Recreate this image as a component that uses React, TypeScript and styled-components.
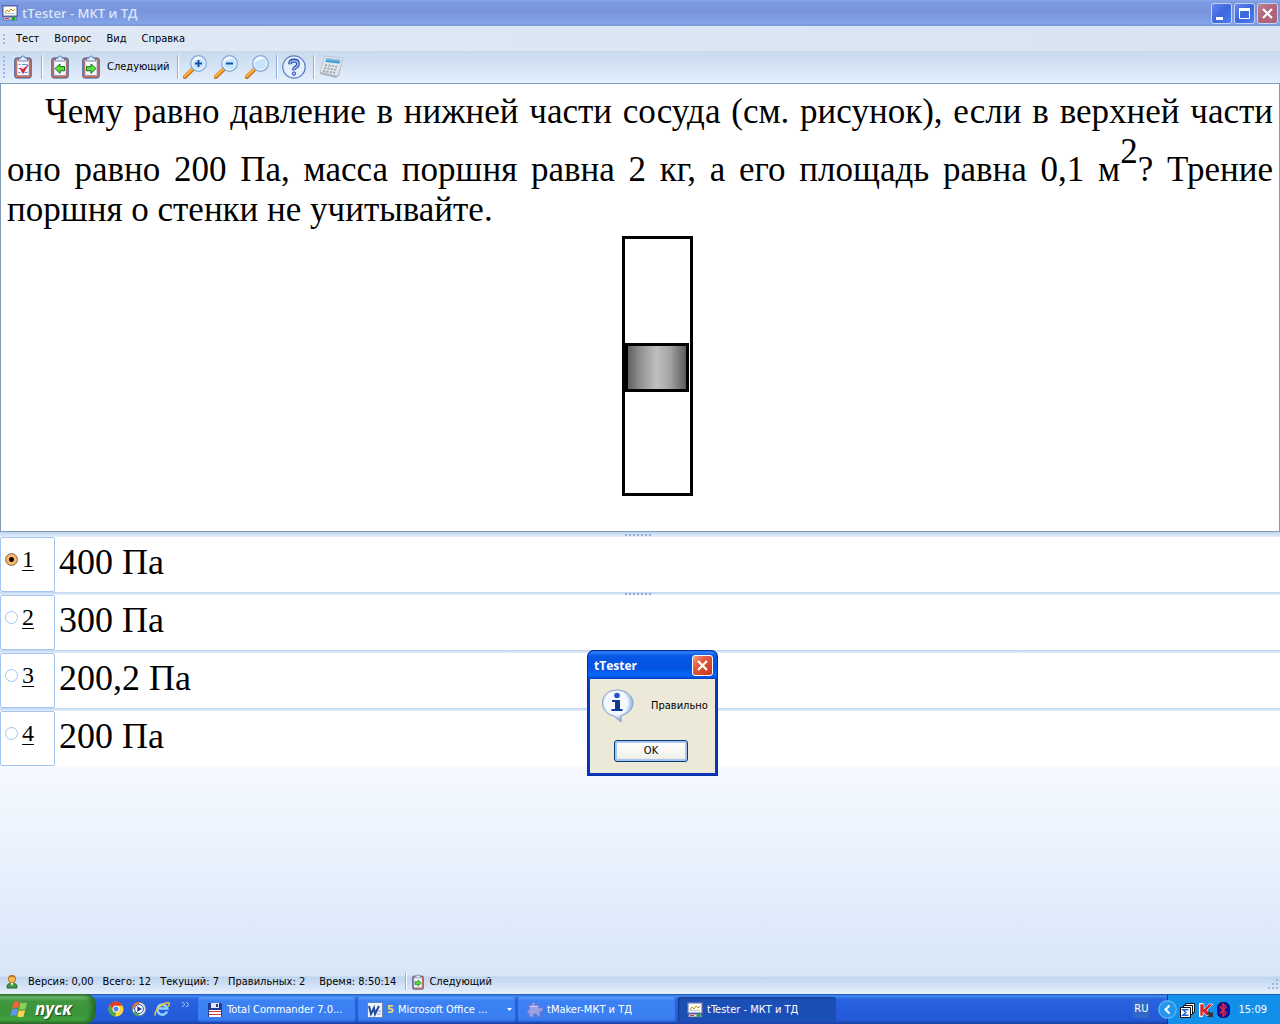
import React, { useState } from "react";
import styled, { createGlobalStyle, css } from "styled-components";

const uiFont = `"DejaVu Sans Condensed", "DejaVu Sans", sans-serif`;
const captionFont = `"Open Sans", "Noto Sans", sans-serif`;
const textFont = `"Liberation Serif", "Times New Roman", serif`;

const GlobalStyle = createGlobalStyle`
  *, *::before, *::after { box-sizing: border-box; }
  body { margin: 0; font: 11px/16px ${uiFont}; color: #000; }
  button { font: inherit; color: inherit; padding: 0; border: 0; background: none; }
  svg { display: block; flex: none; }
`;

const Desktop = styled.div`
  position: relative;
  display: flex;
  flex-direction: column;
  min-height: 100vh;
  background: #fff;
`;

const TitleBar = styled.header`
  display: flex;
  align-items: center;
  gap: 4px;
  height: 26px;
  padding: 0 2px;
  background: linear-gradient(#86a6e8 0, #7b98e0 3px, #7894dd 12px, #7f9fe6 20px, #82a5e8 23px, #7b93d8 26px);
`;

const Caption = styled.h1`
  flex: 1;
  margin: 0;
  font: 600 13px/20px ${captionFont};
  color: #dbe5f9;
`;

const CaptionButtons = styled.div`
  display: flex;
  gap: 2px;
`;

const CaptionButton = styled.button<{ $close?: boolean }>`
  display: grid;
  place-items: center;
  width: 21px;
  height: 21px;
  border: 1px solid #c3d3f4;
  border-radius: 3px;
  background: ${(p) =>
    p.$close
      ? "linear-gradient(135deg, #c08292, #b0637a 50%, #a96678)"
      : "linear-gradient(135deg, #6389ec, #3d66dd 50%, #4a80f0)"};
`;

const MenuBar = styled.nav`
  display: flex;
  align-items: center;
  gap: 15px;
  height: 25px;
  padding: 0 3px;
  background: linear-gradient(90deg, #dfe9f5, #d8e4f2);
`;

const MenuItem = styled.button``;

const Grip = styled.span<{ $tall?: boolean }>`
  width: 2px;
  height: ${(p) => (p.$tall ? 22 : 10)}px;
  margin-right: ${(p) => (p.$tall ? 9 : -4)}px;
  background: repeating-linear-gradient(#9dbbe6 0 2px, transparent 2px 4px);
`;

const ToolBar = styled.div`
  display: flex;
  align-items: center;
  height: 32px;
  padding: 0 3px;
  background: linear-gradient(#c9daee, #d5e4f6 50%, #e5f0fe);
`;

const ToolButton = styled.button<{ $space?: number }>`
  display: flex;
  align-items: center;
  gap: 7px;
  margin-right: ${(p) => p.$space ?? 7}px;
`;

const Divider = styled.span<{ $tight?: boolean }>`
  width: 2px;
  height: 24px;
  margin-right: ${(p) => (p.$tight ? 4 : 8)}px;
  border-left: 1px solid #8fb0dd;
  border-right: 1px solid #fff;
`;

const Question = styled.main`
  padding: 8px 6px 35px;
  border: 1px solid #7f9db9;
`;

const QuestionText = styled.p`
  margin: 0 0 6px;
  font: 35px/40px ${textFont};
  text-align: justify;
  text-indent: 38px;
`;

const Power = styled.span`
  vertical-align: 18px;
`;

const Figure = styled.figure`
  display: flex;
  justify-content: center;
  margin: 0;
  padding-left: 34px;
`;

const Splitter = styled.div<{ $wide?: boolean }>`
  display: flex;
  justify-content: center;
  align-items: center;
  height: ${(p) => (p.$wide ? 5 : 3)}px;
  padding-right: 4px;
  background: linear-gradient(#bfd4ef, #e6effc);
`;

const SplitterDots = styled.span`
  width: 26px;
  height: 2px;
  background: repeating-linear-gradient(90deg, #8faadb 0 2px, transparent 2px 4px);
`;

const Answers = styled.form`
  display: flex;
  flex-direction: column;
`;

const AnswerRow = styled.label`
  display: flex;
  height: 55px;
  background: #fff;
  font: 36px/51px ${textFont};
`;

const AnswerKey = styled.span`
  display: flex;
  align-items: center;
  gap: 4px;
  width: 55px;
  margin-right: 4px;
  padding: 0 0 11px 4px;
  border: 1px solid #a3c3f0;
  border-radius: 2px;
  font: 24px/26px ${textFont};
  text-decoration: underline;
  text-decoration-thickness: 1px;
  text-underline-offset: 3px;
`;

const Radio = styled.input`
  appearance: none;
  width: 13px;
  height: 13px;
  margin: 0;
  border: 1px solid #a3c3f0;
  border-radius: 50%;
  background: #fff;

  &:checked {
    border-color: #80705c;
    background: radial-gradient(circle, #000 0 2px, #ffc078 3px, #f5a855 5px, #ffd79f 6px);
  }
`;

const EmptyArea = styled.div`
  flex: 1;
  background: linear-gradient(#f6faff, #d9e7fa);
`;

const StatusBar = styled.footer`
  display: flex;
  align-items: center;
  height: 29px;
  padding: 4px 0 0 4px;
  background: linear-gradient(#dbe8f9 0, #d7e5f7 11px, #bfd5ef 12px, #cfdff5 19px, #e4effd 28px);
`;

const StatusItem = styled.span<{ $wide?: boolean }>`
  margin-right: ${(p) => (p.$wide ? 14 : 9)}px;
`;

const StatusIcon = styled.span`
  margin-right: 8px;
`;

const StatusButton = styled.button`
  display: flex;
  align-items: center;
  gap: 5px;
`;

const StatusDivider = styled(Divider)`
  height: 17px;
  margin-right: 5px;
`;

const SizeGrip = styled.span`
  margin: 7px 0 0 auto;
`;

const TaskBar = styled.div`
  display: flex;
  align-items: stretch;
  height: 30px;
  color: #fff;
  background: linear-gradient(#1f4fb8 0, #3f8cf0 2px, #2a63e0 5px, #245bdb 20px, #2259d6 26px, #1941a5 30px);
`;

const StartButton = styled.button`
  display: flex;
  align-items: center;
  gap: 6px;
  width: 96px;
  padding-left: 10px;
  border-radius: 0 10px 12px 0;
  background: linear-gradient(#2e7430 0, #6fbc6f 3px, #41973f 7px, #3a953a 20px, #40a33e 26px, #2b6f2b 30px);
  box-shadow: inset -4px 0 5px #266526;
  font: italic 700 17px/24px ${captionFont};
  text-shadow: 1px 1px 1px #1c481c;
`;

const QuickLaunch = styled.div`
  display: flex;
  align-items: center;
  gap: 7px;
  width: 102px;
  padding-left: 12px;
`;

const LaunchButton = styled.button``;

const Tasks = styled.div`
  display: flex;
  flex: 1;
  gap: 2px;
  padding: 3px 0 2px;
`;

const Task = styled.button<{ $active?: boolean }>`
  display: flex;
  align-items: center;
  gap: 4px;
  width: 158px;
  padding: 0 4px 0 9px;
  border-radius: 3px;
  text-align: left;
  ${(p) =>
    p.$active
      ? css`
          background: #1c4fb5;
          box-shadow: inset 1px 1px 2px #103887;
        `
      : css`
          background: linear-gradient(#5a9bfa 0, #3c81f3 4px, #3b80f3 20px, #3573e6 25px);
          box-shadow: inset -1px -1px 1px #2a62cf;
        `}
`;

const TaskName = styled.span`
  flex: 1;
  white-space: nowrap;
`;

const TaskCount = styled.b`
  color: #ffcf6b;
`;

const Language = styled.button`
  align-self: center;
  height: 17px;
  margin-right: 9px;
  padding: 0 1px;
  background: #3169c6;
`;

const Tray = styled.div`
  display: flex;
  align-items: center;
  gap: 3px;
  padding-right: 13px;
  background: linear-gradient(90deg, transparent 0 9px, #0a3b8f 9px 10px, transparent 10px),
    linear-gradient(90deg, transparent 9px, #1290e9 9px);
  border-top: 1px solid #1b59b5;
`;

const Clock = styled.time`
  margin-left: 5px;
`;

const Dialog = styled.section`
  position: absolute;
  top: 650px;
  left: calc(50% - 53px);
  width: 131px;
  padding: 0 3px 3px;
  border-radius: 7px 7px 0 0;
  background: linear-gradient(#0a4fd8 0, #2b80f8 2px, #0557e5 6px, #0453e0 18px, #0666fb 25px, #0340c8 29px, #0b35ba 100%);
  box-shadow: inset 0 0 0 1px #0831a8;
`;

const DialogHead = styled.header`
  display: flex;
  align-items: center;
  height: 29px;
  padding: 2px 2px 0 4px;
`;

const DialogTitle = styled.h2`
  flex: 1;
  margin: 0;
  font: 700 12px/20px ${captionFont};
  color: #fff;
`;

const DialogClose = styled(CaptionButton)`
  border-color: #fff;
  background: linear-gradient(135deg, #f0a08a, #e1573a 40%, #c9361a);
`;

const DialogBody = styled.div`
  display: flex;
  flex-direction: column;
  align-items: center;
  gap: 17px;
  padding: 10px 3px 11px 0;
  background: #ece9d8;
`;

const Message = styled.div`
  display: flex;
  align-items: center;
  align-self: flex-start;
  gap: 16px;
  padding-left: 11px;
`;

const OkButton = styled.button`
  width: 74px;
  height: 22px;
  border: 1px solid #003c74;
  border-radius: 3px;
  background: linear-gradient(#fff, #f3f2ec 80%, #dfdccf);
  box-shadow: inset 0 0 0 2px #a9c6f2;
`;

const AppIcon = () => (
  <svg width="16" height="16" viewBox="0 0 16 16">
    <path d="M0 0h16v12H0z" fill="#5a68b4" />
    <path d="M1.5 1.5h13v9h-13z" fill="#fffdf0" />
    <path d="M3 8l2-3 2 2 2-3 2 2 2-2" fill="none" stroke="#c79024" />
    <path d="M3 8.5h10" stroke="#b8c6e8" />
    <path d="M2 12h12l1 3H1z" fill="#d8d5e8" stroke="#4d5795" strokeWidth=".7" />
    <path d="M3 13.5h4" stroke="#c0404b" />
    <circle cx="11.5" cy="13.5" r="2" fill="#22a42e" />
  </svg>
);

type ClipKind = "check" | "left" | "right";

const Clipboard = ({ kind, size = 24 }: { kind: ClipKind; size?: number }) => (
  <svg width={size === 24 ? 18 : 12} height={size} viewBox="0 0 18 24">
    <rect x=".8" y="3" width="16.4" height="20" rx="2" fill="#d9714d" stroke="#3d5696" />
    <path d="M3 5h12v15.5H3z" fill="#f6f9ff" stroke="#6e83b8" strokeWidth=".6" />
    <path d="M4.5 6V3.2h2.3Q7 1 9 1t2.2 2.2h2.3V6z" fill="#e2eaf8" stroke="#53699f" strokeWidth=".8" />
    {kind === "check" && (
      <>
        <path d="M4.5 9.5h2M8 9.5h5.5M4.5 13.5h2M10.5 17.5h3M4.5 17.5h2" stroke="#6a8bd0" />
        <path d="M6 13l3 5.5L14 10l-5 4.5z" fill="#e01b2d" stroke="#d8202c" strokeWidth=".8" />
      </>
    )}
    {kind === "left" && (
      <path d="M4 13.5L9 9v2.6h4.5v4.2H9v2.7z" fill="#5fdc3c" stroke="#13741a" />
    )}
    {kind === "right" && (
      <path d="M14 13.5L9 9v2.6H4.5v4.2H9v2.7z" fill="#5fdc3c" stroke="#13741a" />
    )}
  </svg>
);

const Magnifier = ({ sign }: { sign?: "+" | "-" }) => (
  <svg width="24" height="24" viewBox="0 0 24 24">
    <path d="M1.8 22L10 14" stroke="#c0701c" strokeWidth="4" strokeLinecap="round" />
    <path d="M1.7 21.4L9.5 13.8" stroke="#ffad35" strokeWidth="2.4" strokeLinecap="round" />
    <circle cx="15.5" cy="8.5" r="7.8" fill="#c4e5fb" stroke="#8cacd9" strokeWidth="1.3" />
    <path d="M9.5 8a6 6 0 0 1 10-4.3Q12 4 9.5 8z" fill="#fff" opacity=".85" />
    <circle cx="15.5" cy="8.5" r="6.4" fill="none" stroke="#eff9ff" />
    {sign && <path d="M12 8.5h7" stroke="#1450aa" strokeWidth="2" />}
    {sign === "+" && <path d="M15.5 5v7" stroke="#1450aa" strokeWidth="2" />}
  </svg>
);

const HelpIcon = () => (
  <svg width="24" height="24" viewBox="0 0 24 24">
    <circle cx="12" cy="12" r="11.2" fill="#e4effe" stroke="#5c7fc4" strokeWidth="1.2" />
    <path d="M8 9.2Q8 5.5 12 5.5t4 3.5q0 2-2.1 3.2T12 15.2" fill="none" stroke="#2d4fa8" strokeWidth="3.8" />
    <path d="M8 8.8Q8.2 5.7 12 5.7t4 3.3q0 2-2.1 3.2T12 14.7" fill="none" stroke="#9ec0f4" strokeWidth="1.6" />
    <circle cx="12" cy="18.6" r="1.7" fill="#9ec0f4" stroke="#2d4fa8" />
  </svg>
);

const Calculator = () => (
  <svg width="26" height="24" viewBox="0 0 26 24">
    <path d="M6 1l18 2-4 18-3 2L1 19v-2z" fill="#aeb5bf" />
    <path d="M6 1l18 2-5 18L1 17z" fill="#e4e7eb" stroke="#b4bcc7" strokeWidth=".7" />
    <path d="M7.5 3l14 1.7-1 4L6.3 7z" fill="#4d9cd8" />
    <path d="M7.5 3l14 1.7-.4 1.5L7 4.6z" fill="#91c4e9" />
    <path d="M6 10l13 2M5 13l13 2M4 16l13 2" stroke="#a3abb6" strokeWidth="2" strokeDasharray="2.2 1.2" />
  </svg>
);

const Vessel = () => (
  <svg width="71" height="260" viewBox="0 0 71 260" role="img" aria-label="Сосуд с поршнем">
    <defs>
      <linearGradient id="piston">
        <stop offset="0" stopColor="#5a5a5a" />
        <stop offset=".25" stopColor="#969696" />
        <stop offset=".5" stopColor="#c0c0c0" />
        <stop offset=".72" stopColor="#a2a2a2" />
        <stop offset="1" stopColor="#555" />
      </linearGradient>
    </defs>
    <rect x="1.5" y="1.5" width="68" height="257" fill="none" stroke="#000" strokeWidth="3" />
    <rect x="4.5" y="108.5" width="61" height="46" fill="url(#piston)" stroke="#000" strokeWidth="3" />
  </svg>
);

const UserIcon = () => (
  <svg width="16" height="16" viewBox="0 0 16 16">
    <path d="M3 13q0-4 5-4t5 4v1H3z" fill="#3f9b48" stroke="#26642d" />
    <path d="M6 8h4l-2 4z" fill="#fff1c4" />
    <circle cx="8" cy="5" r="3.7" fill="#f6bd58" stroke="#b87320" />
    <path d="M4.6 4Q5 1 8 1t3.4 3Q8 2 4.6 4z" fill="#bd7622" />
  </svg>
);

const WindowsFlag = () => (
  <svg width="19" height="18" viewBox="0 0 19 18">
    <path d="M3.5 2.5Q6.5.5 9.5 2L8 8.5Q5 7 2 9z" fill="#f0623a" />
    <path d="M10.5 2.4Q13.5 4 17 2.2L15.4 8.8Q12 10.5 9 9z" fill="#8ed15a" />
    <path d="M1.8 10Q4.8 8 7.8 9.5L6.2 16Q3.5 14.5.2 16.5z" fill="#5e97f6" />
    <path d="M8.8 10Q12 11.5 15.2 9.8L13.6 16.5Q10.5 18 7.2 16.5z" fill="#fbd24c" />
  </svg>
);

const ChromeIcon = () => (
  <svg width="16" height="16" viewBox="0 0 16 16">
    <circle cx="8" cy="8" r="7.5" fill="#f9d33f" />
    <path d="M1.5 4.2A7.5 7.5 0 0 1 14.6 4.5L8 5 5 9z" fill="#df3c2d" />
    <path d="M1.4 4.3L5 9.5l3 2-1 4A7.5 7.5 0 0 1 1.4 4.3z" fill="#4ba64b" />
    <circle cx="8" cy="8" r="3.5" fill="#fff" />
    <circle cx="8" cy="8" r="2.5" fill="#4c8be0" />
  </svg>
);

const PlayerIcon = () => (
  <svg width="16" height="16" viewBox="0 0 16 16">
    <circle cx="8" cy="8" r="7" fill="#dce6f5" stroke="#56698e" />
    <path d="M2 8a6 6 0 0 1 6-6" stroke="#e5702d" strokeWidth="2" fill="none" />
    <path d="M8 14a6 6 0 0 1-5-3" stroke="#50ac42" strokeWidth="2" fill="none" />
    <circle cx="8" cy="8" r="4.4" fill="#fff" stroke="#2d5ab0" />
    <path d="M6.3 5.2v5.6L11 8z" fill="#173a91" />
  </svg>
);

const ExplorerIcon = () => (
  <svg width="16" height="16" viewBox="0 0 16 16">
    <path d="M13 10.5a5 5 0 1 1 .2-3H4.5" fill="none" stroke="#8bd4fc" strokeWidth="2.6" />
    <path d="M1.5 14.5Q-.5 12 5 6.5T15 1.8q1.2 1-1.2 4" fill="none" stroke="#f2bf35" strokeWidth="1.5" />
  </svg>
);

const FloppyIcon = () => (
  <svg width="16" height="16" viewBox="0 0 16 16">
    <path d="M1 1h13l1 1v13H1z" fill="#273b96" />
    <path d="M4 1h8v5H4z" fill="#e3e7f2" />
    <path d="M9 2h2v3H9z" fill="#273b96" />
    <path d="M2 8h12v7H2z" fill="#fff" />
    <path d="M2 9.5h12M2 12.5h12" stroke="#d03d45" />
  </svg>
);

const WordIcon = () => (
  <svg width="16" height="16" viewBox="0 0 16 16">
    <path d="M.5.5h15v15H.5z" fill="#f0f4fb" stroke="#6a82bc" />
    <path d="M2 4l2 8 3-6 1 6 4-8" fill="none" stroke="#244a9d" strokeWidth="2" />
    <path d="M11 9h3M10 12h4" stroke="#8ca4d5" />
  </svg>
);

const PuzzleIcon = () => (
  <svg width="16" height="16" viewBox="0 0 16 16">
    <path
      d="M2 3h3q-1-3 1.5-3T8 3h4v3q3-1.5 4 .8T13 10v5h-3q1-3-1.7-3T7 15H2v-4q-2 1-2-1.5T2 8z"
      fill="#9aa2e6"
      stroke="#6a72c4"
    />
    <path d="M3 4.5h8" stroke="#c4caff" />
  </svg>
);

const TrayArrow = () => (
  <svg width="19" height="19" viewBox="0 0 19 19">
    <circle cx="9.5" cy="9.5" r="8.8" fill="#2496ee" stroke="#78c7fb" strokeWidth="1" />
    <path d="M11.5 5.5l-4 4 4 4" fill="none" stroke="#fff" strokeWidth="2" />
  </svg>
);

const SigmaIcon = () => (
  <svg width="16" height="16" viewBox="0 0 16 16">
    <path d="M5.5 1.5h9v9h-9z" fill="#fff" stroke="#111" />
    <path d="M3.5 3.5h9v9h-9z" fill="#fff" stroke="#111" />
    <path d="M.5 5.5h10v10H.5z" fill="#fff" stroke="#111" />
    <path d="M8.5 7.8H3L5.8 10.500 3 13.200h5.500" fill="none" stroke="#2368cf" strokeWidth="1.6" />
  </svg>
);

const KasperskyIcon = () => (
  <svg width="15" height="16" viewBox="0 0 15 16">
    <path d="M0 1h4v14H0z" fill="#eee" />
    <path d="M1 2h4v5l5-5h4L8 8l3 4-3 2-4-4v4H1z" fill="#d9252a" stroke="#fff" strokeWidth=".6" />
    <path d="M8 11l2-2 2 2 2-1v5H8l2-2z" fill="#333" />
  </svg>
);

const BluetoothIcon = () => (
  <svg width="13" height="16" viewBox="0 0 13 16">
    <rect x=".5" y=".5" width="12" height="15" rx="5" fill="#0718a7" stroke="#061074" />
    <path d="M3 4.5l6 6.5-3 3V2l3 3-6 6.5" fill="none" stroke="#f3262f" strokeWidth="1.4" />
  </svg>
);

const InfoIcon = () => (
  <svg width="34" height="34" viewBox="0 0 34 34">
    <defs>
      <radialGradient id="bubble" cx=".45" cy=".4">
        <stop offset="0" stopColor="#fff" />
        <stop offset=".75" stopColor="#f2f7fe" />
        <stop offset="1" stopColor="#a3bfe5" />
      </radialGradient>
    </defs>
    <path
      d="M16 1C7 1 1.500 7 1.500 14S7 26 13 27l7 6v-6.500c7-1.500 12-6 12-12.500C32 7 25 1 16 1z"
      fill="url(#bubble)"
      stroke="#7f9fca"
    />
    <circle cx="16" cy="6.5" r="2.8" fill="#1d55c4" />
    <path d="M11 11h8v9h2.500v2h-11v-2H14v-7h-3z" fill="#123894" />
  </svg>
);

const answers = ["400 Па", "300 Па", "200,2 Па", "200 Па"];

export default function App() {
  const [selected, setSelected] = useState(0);
  const [open, setOpen] = useState(true);

  return (
    <Desktop>
      <GlobalStyle />
      <TitleBar>
        <AppIcon />
        <Caption>tTester - МКТ и ТД</Caption>
        <CaptionButtons>
          <CaptionButton aria-label="Свернуть">
            <svg width="15" height="15" viewBox="0 0 15 15">
              <path d="M2 11h7v3H2z" fill="#fff" />
            </svg>
          </CaptionButton>
          <CaptionButton aria-label="Развернуть">
            <svg width="15" height="15" viewBox="0 0 15 15">
              <path d="M2.500 3v9.500h10V3" fill="none" stroke="#fff" />
              <path d="M2 3.500h11" stroke="#fff" strokeWidth="3" />
            </svg>
          </CaptionButton>
          <CaptionButton $close aria-label="Закрыть">
            <svg width="15" height="15" viewBox="0 0 15 15">
              <path d="M3 3l9 9M12 3l-9 9" stroke="#fff" strokeWidth="2.2" />
            </svg>
          </CaptionButton>
        </CaptionButtons>
      </TitleBar>

      <MenuBar>
        <Grip />
        <MenuItem>Тест</MenuItem>
        <MenuItem>Вопрос</MenuItem>
        <MenuItem>Вид</MenuItem>
        <MenuItem>Справка</MenuItem>
      </MenuBar>

      <ToolBar>
        <Grip $tall />
        <ToolButton $space={9} aria-label="Проверить"><Clipboard kind="check" /></ToolButton>
        <Divider />
        <ToolButton $space={13} aria-label="Предыдущий"><Clipboard kind="left" /></ToolButton>
        <ToolButton><Clipboard kind="right" />Следующий</ToolButton>
        <Divider $tight />
        <ToolButton aria-label="Увеличить"><Magnifier sign="+" /></ToolButton>
        <ToolButton aria-label="Уменьшить"><Magnifier sign="-" /></ToolButton>
        <ToolButton aria-label="Масштаб"><Magnifier /></ToolButton>
        <Divider $tight />
        <ToolButton aria-label="Помощь"><HelpIcon /></ToolButton>
        <Divider $tight />
        <ToolButton aria-label="Калькулятор"><Calculator /></ToolButton>
      </ToolBar>

      <Question>
        <QuestionText>
          Чему равно давление в нижней части сосуда (см. рисунок), если в верхней части оно равно
          200 Па, масса поршня равна 2 кг, а его площадь равна 0,1 м<Power>2</Power>? Трение поршня
          о стенки не учитывайте.
        </QuestionText>
        <Figure><Vessel /></Figure>
      </Question>

      <Splitter $wide><SplitterDots /></Splitter>
      <Answers>
        {answers.map((answer, i) => (
          <React.Fragment key={i}>
            {i > 0 && <Splitter>{i === 1 && <SplitterDots />}</Splitter>}
            <AnswerRow>
              <AnswerKey>
                <Radio
                  type="radio"
                  name="answer"
                  checked={selected === i}
                  onChange={() => setSelected(i)}
                />
                {i + 1}
              </AnswerKey>
              {answer}
            </AnswerRow>
          </React.Fragment>
        ))}
      </Answers>
      <EmptyArea />

      <StatusBar>
        <StatusIcon><UserIcon /></StatusIcon>
        <StatusItem>Версия: 0,00</StatusItem>
        <StatusItem>Всего: 12</StatusItem>
        <StatusItem>Текущий: 7</StatusItem>
        <StatusItem $wide>Правильных: 2</StatusItem>
        <StatusItem>Время: 8:50:14</StatusItem>
        <StatusDivider />
        <StatusButton><Clipboard kind="right" size={16} />Следующий</StatusButton>
        <SizeGrip>
          <svg width="12" height="12" viewBox="0 0 12 12">
            <path d="M8 0h2v2H8zM4 4h2v2H4zM8 4h2v2H8zM0 8h2v2H0zM4 8h2v2H4zM8 8h2v2H8z" fill="#9db8dc" />
          </svg>
        </SizeGrip>
      </StatusBar>

      <TaskBar>
        <StartButton><WindowsFlag />пуск</StartButton>
        <QuickLaunch>
          <LaunchButton aria-label="Chrome"><ChromeIcon /></LaunchButton>
          <LaunchButton aria-label="Проигрыватель"><PlayerIcon /></LaunchButton>
          <LaunchButton aria-label="Internet Explorer"><ExplorerIcon /></LaunchButton>
          <LaunchButton aria-label="Ещё">
            <svg width="16" height="16" viewBox="0 0 16 16">
              <path d="M5 1l3 2.500L5 6M9 1l3 2.500L9 6" fill="none" stroke="#a9c8ff" />
            </svg>
          </LaunchButton>
        </QuickLaunch>
        <Tasks>
          <Task><FloppyIcon /><TaskName>Total Commander 7.0...</TaskName></Task>
          <Task>
            <WordIcon />
            <TaskCount>5</TaskCount>
            <TaskName>Microsoft Office ...</TaskName>
            <svg width="5" height="3" viewBox="0 0 5 3"><path d="M0 0h5L2.500 3z" fill="#fff" /></svg>
          </Task>
          <Task><PuzzleIcon /><TaskName>tMaker-МКТ и ТД</TaskName></Task>
          <Task $active><AppIcon /><TaskName>tTester - МКТ и ТД</TaskName></Task>
        </Tasks>
        <Language>RU</Language>
        <Tray>
          <LaunchButton aria-label="Показать значки"><TrayArrow /></LaunchButton>
          <SigmaIcon />
          <KasperskyIcon />
          <BluetoothIcon />
          <Clock>15:09</Clock>
        </Tray>
      </TaskBar>

      {open && (
        <Dialog role="dialog" aria-labelledby="dialog-title">
          <DialogHead>
            <DialogTitle id="dialog-title">tTester</DialogTitle>
            <DialogClose aria-label="Закрыть" onClick={() => setOpen(false)}>
              <svg width="15" height="15" viewBox="0 0 15 15">
                <path d="M3 3l9 9M12 3l-9 9" stroke="#fff" strokeWidth="2.2" />
              </svg>
            </DialogClose>
          </DialogHead>
          <DialogBody>
            <Message><InfoIcon />Правильно</Message>
            <OkButton onClick={() => setOpen(false)}>OK</OkButton>
          </DialogBody>
        </Dialog>
      )}
    </Desktop>
  );
}
